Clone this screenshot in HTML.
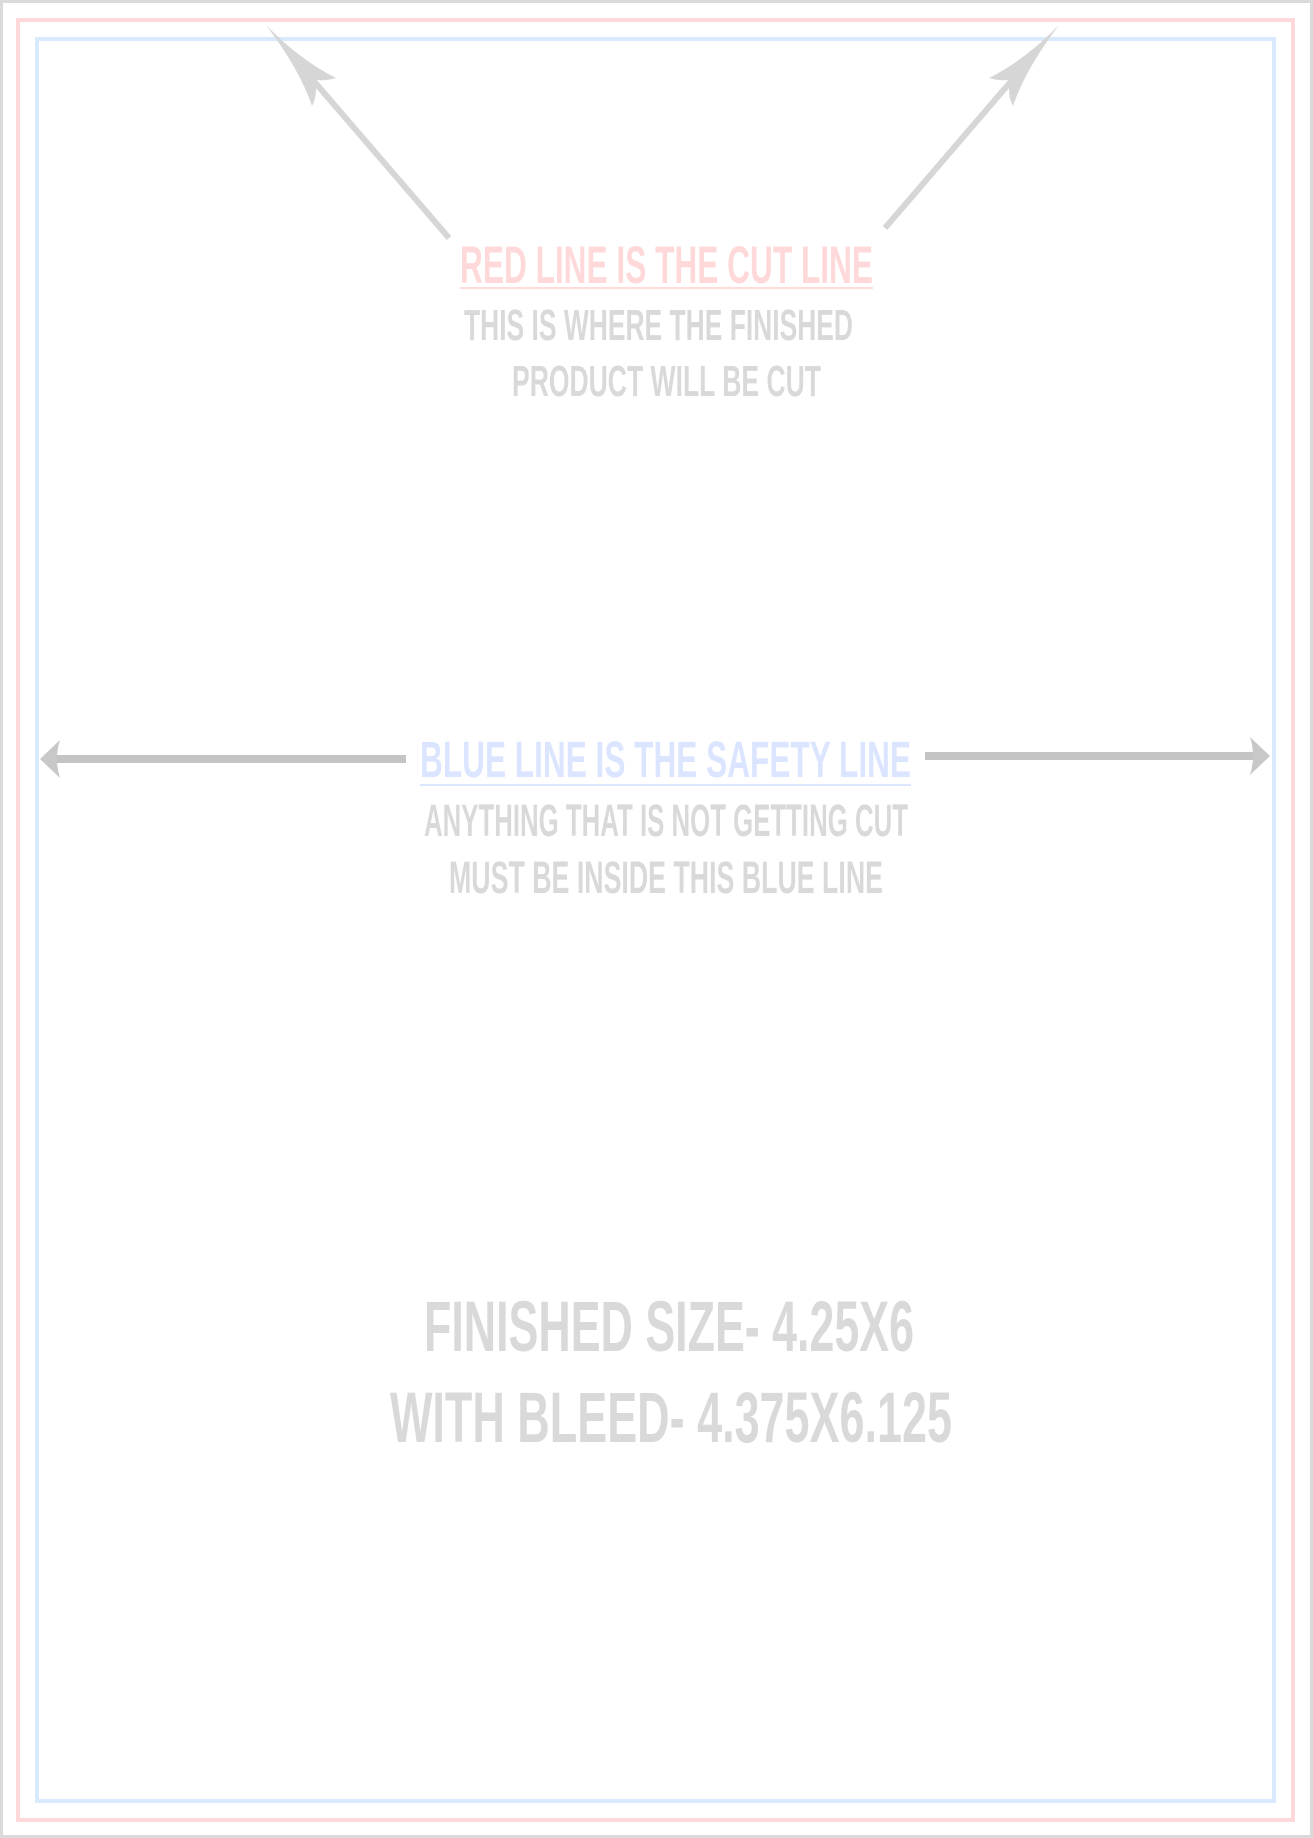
<!DOCTYPE html>
<html><head><style>html,body{margin:0;padding:0;background:#fff;}svg{display:block}</style></head>
<body>
<svg width="1313" height="1838" viewBox="0 0 1313 1838" xmlns="http://www.w3.org/2000/svg">
<rect x="1.5" y="1.5" width="1310" height="1835" fill="#fff" stroke="#dadada" stroke-width="3"/>
<rect x="18" y="20" width="1275" height="1800" fill="none" stroke="#ffd9d9" stroke-width="4"/>
<rect x="37" y="39" width="1237" height="1762" fill="none" stroke="#d9eaff" stroke-width="4"/>
<g fill="#d6d6d6" stroke="none">
<path d="M266 25 Q300 60 336 78 Q322 82 315 79 Q318 95 312 106 Q300 70 266 25 Z"/>
<path d="M1059 25 Q1025 60 989 78 Q1003 82 1010 79 Q1007 95 1013 106 Q1025 70 1059 25 Z"/>
</g>
<line x1="312" y1="79" x2="449" y2="238" stroke="#d6d6d6" stroke-width="6"/>
<line x1="1013" y1="79" x2="885" y2="228" stroke="#d6d6d6" stroke-width="6"/>
<rect x="54" y="755" width="352" height="8" fill="#c4c4c4"/>
<path d="M40 759 L60 740 Q54 759 60 778 Z" fill="#c8c8c8"/>
<rect x="925" y="752" width="332" height="8" fill="#c4c4c4"/>
<path d="M1270 756 L1250 737 Q1256 756 1250 775 Z" fill="#c8c8c8"/>
<g font-family="Liberation Sans, sans-serif" font-weight="bold">
<text x="460" y="283" font-size="53" textLength="413" lengthAdjust="spacingAndGlyphs" fill="#ffd9d9">RED LINE IS THE CUT LINE</text>
<rect x="460" y="287" width="413" height="2" fill="#ffdcdc"/>
<text x="464" y="340" font-size="44" textLength="389" lengthAdjust="spacingAndGlyphs" fill="#d9d9d9">THIS IS WHERE THE FINISHED</text>
<text x="512" y="396" font-size="44" textLength="309" lengthAdjust="spacingAndGlyphs" fill="#d9d9d9">PRODUCT WILL BE CUT</text>
<text x="420" y="777" font-size="51" textLength="491" lengthAdjust="spacingAndGlyphs" fill="#dbe5ff">BLUE LINE IS THE SAFETY LINE</text>
<rect x="420" y="784" width="491" height="2" fill="#dce6ff"/>
<text x="424" y="836" font-size="45" textLength="484" lengthAdjust="spacingAndGlyphs" fill="#d9d9d9">ANYTHING THAT IS NOT GETTING CUT</text>
<text x="449" y="893" font-size="45" textLength="434" lengthAdjust="spacingAndGlyphs" fill="#d9d9d9">MUST BE INSIDE THIS BLUE LINE</text>
<text x="424" y="1351" font-size="71" textLength="490" lengthAdjust="spacingAndGlyphs" fill="#d9d9d9">FINISHED SIZE- 4.25X6</text>
<text x="390" y="1442" font-size="71" textLength="562" lengthAdjust="spacingAndGlyphs" fill="#d9d9d9">WITH BLEED- 4.375X6.125</text>
</g>
</svg>
</body></html>
